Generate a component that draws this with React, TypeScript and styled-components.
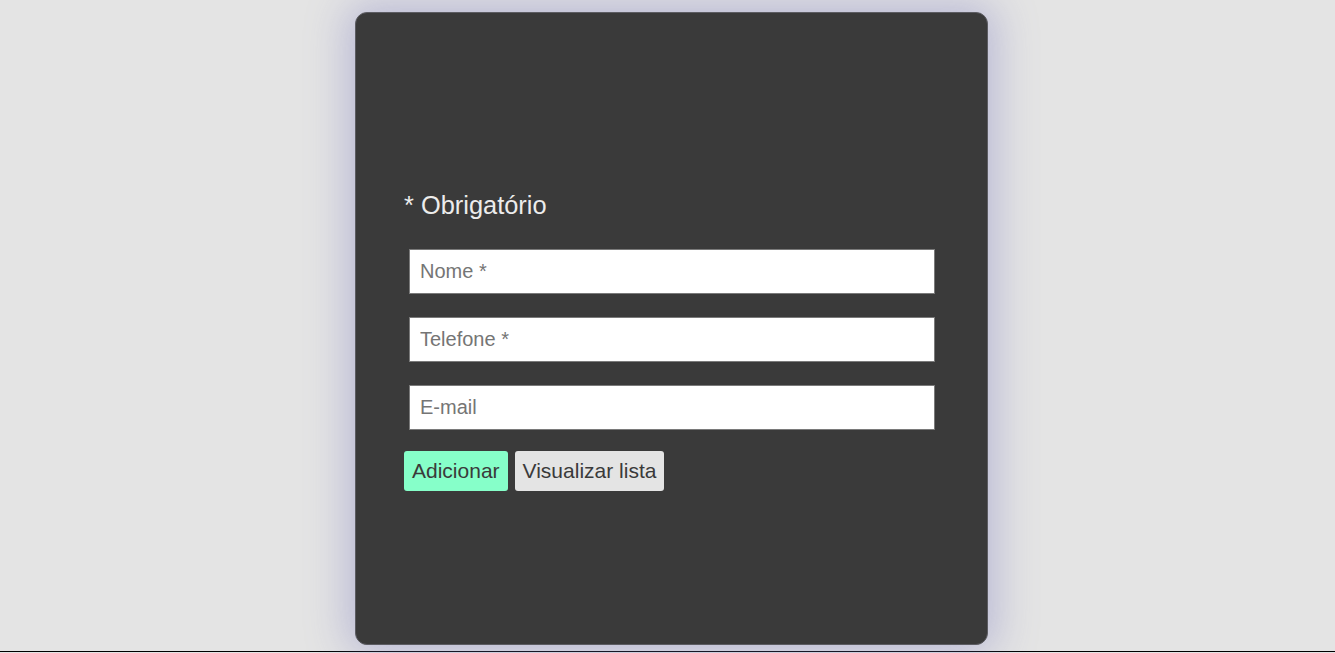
import React from "react";
import styled, { createGlobalStyle } from "styled-components";

const Global = createGlobalStyle`
  html, body { margin: 0; padding: 0; background: #e4e4e4; }
  body { font-family: "Liberation Sans", Arial, sans-serif; overflow: hidden; }
`;

const Page = styled.div`
  display: flex;
  flex-direction: column;
  align-items: center;
  padding: 12px 0 0 8px;
`;

const Card = styled.main`
  position: relative;
  z-index: 1;
  box-sizing: border-box;
  width: 633px;
  height: 633px;
  background: #3a3a3a;
  border: 1px solid #5c5c62;
  border-radius: 12px;
  box-shadow: 0 0 40px 8px rgba(115, 115, 190, 0.38);
  padding: 178px 0 0 48px;
`;

const Title = styled.h2`
  margin: 0 0 29px;
  font-size: 25.4px;
  font-weight: 400;
  color: #ececec;
  line-height: normal;
`;

const Field = styled.input`
  display: block;
  box-sizing: border-box;
  width: 526px;
  height: 45px;
  margin: 0 0 23px 5px;
  padding: 0 10px;
  border: 1px solid #7a7a7a;
  border-radius: 0;
  background: #fff;
  font-family: "Liberation Sans", Arial, sans-serif;
  font-size: 20px;
  color: #333;
  outline: none;
  &::placeholder { color: #757575; }
  &:last-of-type { margin-bottom: 21px; }
`;

const Actions = styled.div`
  display: flex;
  gap: 7px;
`;

const Button = styled.button<{ $primary?: boolean }>`
  height: 40px;
  padding: 0 8px;
  border: none;
  border-radius: 3px;
  background: ${(p) => (p.$primary ? "#86ffc9" : "#e4e4e4")};
  color: #3a3a3a;
  font-family: "Liberation Sans", Arial, sans-serif;
  font-size: 21px;
  cursor: pointer;
`;

const Footer = styled.footer`
  align-self: stretch;
  margin: 6px 0 0 -8px;
  border-top: 1px solid #000;
  height: 10px;
`;

export default function App() {
  return (
    <>
      <Global />
      <Page>
        <Card>
          <Title>* Obrigatório</Title>
          <Field placeholder="Nome *" />
          <Field placeholder="Telefone *" />
          <Field placeholder="E-mail" />
          <Actions>
            <Button $primary>Adicionar</Button>
            <Button>Visualizar lista</Button>
          </Actions>
        </Card>
        <Footer />
      </Page>
    </>
  );
}
